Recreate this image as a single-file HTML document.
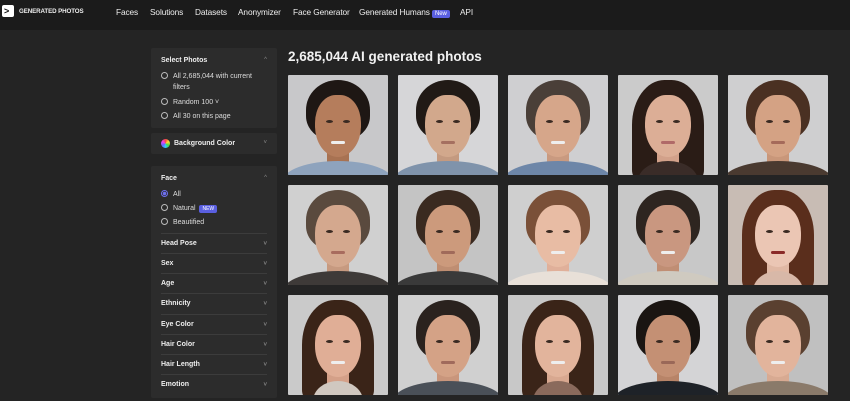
<!DOCTYPE html>
<html><head><meta charset="utf-8"><style>
*{box-sizing:border-box;margin:0;padding:0}
body{width:850px;height:401px;overflow:hidden;background:#242424;font-family:"Liberation Sans",sans-serif;color:#eee;position:relative}
.nav{position:absolute;left:0;top:0;width:850px;height:30px;background:#1b1b1b}
.logo{position:absolute;left:2px;top:5px;width:12px;height:12px;background:#fff;border-radius:2px;color:#111;font-size:9px;font-weight:bold;line-height:12px;padding-left:2px}
.brand{position:absolute;left:19px;top:8px;font-size:6.2px;font-weight:bold;letter-spacing:-.1px}
.nl{position:absolute;top:7px;font-size:8.3px;color:#eee;letter-spacing:-.1px}
.new{background:#5a5fe0;color:#fff;font-size:6px;padding:1px 3px;border-radius:2px}
.panel{position:absolute;left:151px;width:126px;background:#2c2c2c;border-radius:2px}
.ph{position:absolute;left:10px;font-size:7px;font-weight:bold}
.op{position:absolute;left:10px;font-size:7px;color:#ddd}
.r{display:inline-block;width:7px;height:7px;border:1px solid #bbb;border-radius:50%;margin-right:5px;vertical-align:-1px}
.chev{position:absolute;right:10px;font-size:6px;color:#888}
.row{position:absolute;left:10px;width:106px;height:20px;border-top:1px solid #3c3c3c;font-size:7px;font-weight:bold;line-height:20px}
.row .chev{right:0}
h1{position:absolute;left:288px;top:49px;font-size:13.5px;font-weight:bold;color:#f2f2f2}
.t{position:absolute;width:100px;height:100px;overflow:hidden;border-radius:1px}
.t div{position:absolute}
.hb{left:18px;top:5px;width:64px;height:60px;border-radius:50% 50% 40% 40%}
.lh{left:14px;top:5px;width:72px;height:100px;border-radius:45% 45% 10% 10%}
.f{left:27px;top:20px;width:46px;height:62px;border-radius:45% 45% 50% 50%}
.s{left:-5px;top:86px;width:110px;height:40px;border-radius:50% 50% 0 0}
.n{left:39px;top:70px;width:22px;height:22px}
.e1,.e2{top:45px;width:7px;height:3px;background:#3a2a22;border-radius:50%}
.e1{left:38px}.e2{left:55px}
.m{left:43px;top:66px;width:14px;height:3px;border-radius:2px}
</style></head><body>
<div class="nav">
<div class="logo">&gt;</div><div class="brand">GENERATED PHOTOS</div>
<div class="nl" style="left:116px">Faces</div>
<div class="nl" style="left:150px">Solutions</div>
<div class="nl" style="left:195px">Datasets</div>
<div class="nl" style="left:238px">Anonymizer</div>
<div class="nl" style="left:293px">Face Generator</div>
<div class="nl" style="left:359px">Generated Humans <span class="new">New</span></div>
<div class="nl" style="left:460px">API</div>
</div>

<div class="panel" style="top:48px;height:80px">
<div class="ph" style="top:9px">Select Photos</div><div class="chev" style="top:9px">^</div>
<div class="op" style="top:24px"><span class="r"></span>All 2,685,044 with current</div>
<div class="op" style="top:36px;left:22px">filters</div>
<div class="op" style="top:50px"><span class="r"></span>Random 100 ˅</div>
<div class="op" style="top:64px"><span class="r"></span>All 30 on this page</div>
</div>
<div class="panel" style="top:133px;height:21px">
<div style="position:absolute;left:10px;top:6px;width:9px;height:9px;border-radius:50%;background:conic-gradient(#f44,#fd3,#4d4,#3cf,#66f,#e4e,#f44)"></div>
<div class="ph" style="top:7px;left:23px">Background Color</div><div class="chev" style="top:7px">˅</div>
</div>
<div class="panel" style="top:166px;height:232px">
<div class="ph" style="top:9px">Face</div><div class="chev" style="top:9px">^</div>
<div class="op" style="top:24px"><span class="r" style="border-color:#6d6ff0;background:radial-gradient(#6d6ff0 45%,transparent 55%)"></span>All</div>
<div class="op" style="top:38px"><span class="r"></span>Natural &nbsp;<span class="new" style="font-size:5px">NEW</span></div>
<div class="op" style="top:52px"><span class="r"></span>Beautified</div>
<div class="row" style="top:67px">Head Pose<span class="chev">˅</span></div>
<div class="row" style="top:87px">Sex<span class="chev">˅</span></div>
<div class="row" style="top:107px">Age<span class="chev">˅</span></div>
<div class="row" style="top:127px">Ethnicity<span class="chev">˅</span></div>
<div class="row" style="top:148px">Eye Color<span class="chev">˅</span></div>
<div class="row" style="top:168px">Hair Color<span class="chev">˅</span></div>
<div class="row" style="top:188px">Hair Length<span class="chev">˅</span></div>
<div class="row" style="top:208px">Emotion<span class="chev">˅</span></div>
</div>

<h1>2,685,044 AI generated photos</h1>

<div class="t" style="left:288px;top:75px;background:#c8c8ca"><div class="hb" style="background:#1e1714"></div><div class="n" style="background:#a87252"></div><div class="f" style="background:#b57d5c"></div><div class="s" style="background:#8ea3bd"></div><div class="e1"></div><div class="e2"></div><div class="m" style="background:#eee"></div></div>
<div class="t" style="left:398px;top:75px;background:#d6d6d8"><div class="hb" style="background:#211a16"></div><div class="n" style="background:#c49a80"></div><div class="f" style="background:#d2a88c"></div><div class="s" style="background:#7f93ab"></div><div class="e1"></div><div class="e2"></div><div class="m" style="background:#a57060"></div></div>
<div class="t" style="left:508px;top:75px;background:#cfcfd1"><div class="hb" style="background:#4a3f38"></div><div class="n" style="background:#c99a80"></div><div class="f" style="background:#d6a68a"></div><div class="s" style="background:#6d86a8"></div><div class="e1"></div><div class="e2"></div><div class="m" style="background:#eee"></div></div>
<div class="t" style="left:618px;top:75px;background:#cbcbcb"><div class="lh" style="background:#2a1c16"></div><div class="n" style="background:#d2a18a"></div><div class="f" style="background:#dcae96"></div><div class="s" style="background:#3a2c28;left:20px;width:60px"></div><div class="e1"></div><div class="e2"></div><div class="m" style="background:#b06a68"></div></div>
<div class="t" style="left:728px;top:75px;background:#cfcfd0"><div class="hb" style="background:#4a3022"></div><div class="n" style="background:#c9977a"></div><div class="f" style="background:#d4a284"></div><div class="s" style="background:#4a3a30"></div><div class="e1"></div><div class="e2"></div><div class="m" style="background:#a56a5a"></div></div>

<div class="t" style="left:288px;top:185px;background:#d0d0d0"><div class="hb" style="background:#5a4a3e"></div><div class="n" style="background:#c79a80"></div><div class="f" style="background:#d4a88e"></div><div class="s" style="background:#3e3a38"></div><div class="e1"></div><div class="e2"></div><div class="m" style="background:#a86c5e"></div></div>
<div class="t" style="left:398px;top:185px;background:#c4c4c4"><div class="hb" style="background:#3a2a20"></div><div class="n" style="background:#bf8e72"></div><div class="f" style="background:#cc9a7c"></div><div class="s" style="background:#3a3a3a"></div><div class="e1"></div><div class="e2"></div><div class="m" style="background:#a06a5a"></div></div>
<div class="t" style="left:508px;top:185px;background:#cfcfcf"><div class="hb" style="background:#7a5038"></div><div class="n" style="background:#e0b09a"></div><div class="f" style="background:#e8bca4"></div><div class="s" style="background:#e8e0d8"></div><div class="e1"></div><div class="e2"></div><div class="m" style="background:#eee"></div></div>
<div class="t" style="left:618px;top:185px;background:#c8c8c8"><div class="hb" style="background:#2e2520"></div><div class="n" style="background:#c08e74"></div><div class="f" style="background:#c99780"></div><div class="s" style="background:#cfcac0"></div><div class="e1"></div><div class="e2"></div><div class="m" style="background:#eee"></div></div>
<div class="t" style="left:728px;top:185px;background:#c8bcb4"><div class="lh" style="background:#5a2e1c"></div><div class="n" style="background:#e0b8a4"></div><div class="f" style="background:#ebc6b4"></div><div class="s" style="background:#d8b8a8;left:25px;width:50px"></div><div class="e1"></div><div class="e2"></div><div class="m" style="background:#8a2a28"></div></div>

<div class="t" style="left:288px;top:295px;background:#cacaca"><div class="lh" style="background:#3a2418"></div><div class="n" style="background:#d4a088"></div><div class="f" style="background:#e0ae96"></div><div class="s" style="background:#d0c8c0;left:25px;width:50px"></div><div class="e1"></div><div class="e2"></div><div class="m" style="background:#eee"></div></div>
<div class="t" style="left:398px;top:295px;background:#d0d0d0"><div class="hb" style="background:#2a221e"></div><div class="n" style="background:#c9967c"></div><div class="f" style="background:#d4a286"></div><div class="s" style="background:#4a5058"></div><div class="e1"></div><div class="e2"></div><div class="m" style="background:#a06a5c"></div></div>
<div class="t" style="left:508px;top:295px;background:#c8c8c8"><div class="lh" style="background:#3a2418"></div><div class="n" style="background:#d8a890"></div><div class="f" style="background:#e2b49c"></div><div class="s" style="background:#8a6a5c;left:25px;width:50px"></div><div class="e1"></div><div class="e2"></div><div class="m" style="background:#eee"></div></div>
<div class="t" style="left:618px;top:295px;background:#d4d4d6"><div class="hb" style="background:#1a1512"></div><div class="n" style="background:#b88468"></div><div class="f" style="background:#c49074"></div><div class="s" style="background:#1e2228"></div><div class="e1"></div><div class="e2"></div><div class="m" style="background:#9a6858"></div></div>
<div class="t" style="left:728px;top:295px;background:#c0c0c0"><div class="hb" style="background:#5a4030"></div><div class="n" style="background:#d8aa92"></div><div class="f" style="background:#e2b49c"></div><div class="s" style="background:#8a7a6a"></div><div class="e1"></div><div class="e2"></div><div class="m" style="background:#eee"></div></div>
</body></html>
